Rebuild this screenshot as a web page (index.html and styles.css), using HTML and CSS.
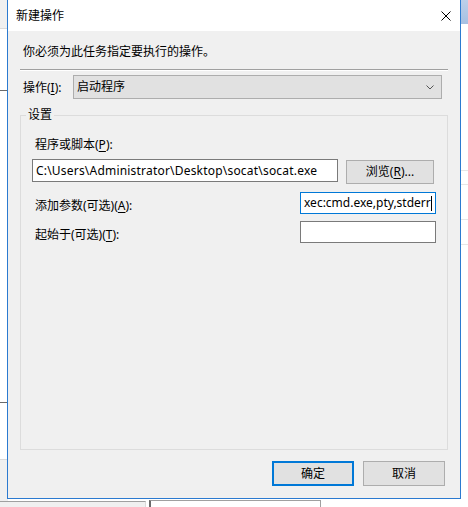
FILE: index.html
```html
<!DOCTYPE html>
<html lang="zh-CN">
<head>
<meta charset="utf-8">
<title>新建操作</title>
<link rel="stylesheet" href="styles.css">
</head>
<body>
<div class="desktop">
  <div class="bg-left">
    <div class="bg-left-pane">
      <div class="tick tick-a"></div>
      <div class="tick tick-b"></div>
    </div>
  </div>
  <div class="bg-right">
    <div class="bg-right-head"></div>
    <div class="hline h1"></div>
    <div class="hline h2"></div>
    <div class="hline h3"></div>
    <div class="hline h4"></div>
  </div>
  <div class="bg-bottom-a"></div>
  <div class="bg-bottom-b"></div>

  <div class="dialog">
    <div class="titlebar">
      <span class="title">新建操作</span>
      <svg class="close" width="10" height="10" viewBox="0 0 10 10">
        <path d="M0.5 0.5 L9.5 9.5 M9.5 0.5 L0.5 9.5" stroke="#000" stroke-width="1" fill="none"/>
      </svg>
    </div>
    <div class="content">
      <p class="intro">你必须为此任务指定要执行的操作。</p>
      <div class="sep"></div>
      <div class="action-row">
        <span class="action-label">操作(<u>I</u>):</span>
        <div class="select">
          <span class="select-text">启动程序</span>
          <svg class="chev" width="8" height="5" viewBox="0 0 8 5">
            <path d="M0.5 0.5 L4 4 L7.5 0.5" stroke="#555" stroke-width="1" fill="none"/>
          </svg>
        </div>
      </div>
      <fieldset class="group">
        <legend class="group-title">设置</legend>
        <div class="field-label">程序或脚本(<u>P</u>):</div>
        <div class="path-row">
          <div class="input path-input">C:\Users\Administrator\Desktop\socat\socat.exe</div>
          <div class="btn browse">浏览(<u>R</u>)...</div>
        </div>
        <div class="opt-row opt-args">
          <span class="opt-label">添加参数(可选)(<u>A</u>):</span>
          <div class="input small-input focused"><span class="scroll-text">xec:cmd.exe,pty,stderr</span><span class="caret"></span></div>
        </div>
        <div class="opt-row opt-start">
          <span class="opt-label">起始于(可选)(<u>T</u>):</span>
          <div class="input small-input"></div>
        </div>
      </fieldset>
      <div class="buttons">
        <div class="btn dlg-btn default">确定</div>
        <div class="btn dlg-btn">取消</div>
      </div>
    </div>
  </div>
</div>
</body>
</html>
```

FILE: styles.css
```css
* { box-sizing: border-box; }
html, body { margin: 0; padding: 0; }
body {
  width: 468px;
  height: 507px;
  overflow: hidden;
  background: #ffffff;
  font-family: "Noto Sans", "Noto Sans CJK SC", sans-serif;
  font-size: 12px;
  line-height: 16px;
  color: #000;
}
u { text-decoration: underline; text-underline-offset: 2px; }

.desktop { position: relative; width: 468px; height: 507px; }

/* background windows */
.bg-left { position: absolute; left: 0; top: 0; width: 8px; height: 501px; background: #f0f0f0; }
.bg-left-pane { position: relative; margin-top: 28px; height: 432px; background: #fff; border-top: 1px solid #dadada; border-bottom: 1px solid #dadada; }
.tick { position: absolute; left: 0; width: 8px; height: 1px; background: #6a6a6a; }
.tick-a { top: 61px; }
.tick-b { top: 373px; }

.bg-right { position: absolute; left: 461px; top: 0; width: 7px; height: 507px; background: #fff; }
.bg-right-head { height: 24px; background: linear-gradient(#bcd0ea, #a7c0e2); }
.hline { position: absolute; left: 0; width: 7px; height: 1px; background: #e6e6e6; }
.h1 { top: 170px; }
.h2 { top: 184px; }
.h3 { top: 219px; }
.h4 { top: 244px; }

.bg-bottom-a { position: absolute; left: 0; top: 501px; width: 146px; height: 6px; background: #f0f0f0; border-top: 1px solid #a0a0a0; border-right: 1px solid #dadada; }
.bg-bottom-b { position: absolute; left: 149px; top: 500px; width: 172px; height: 7px; background: #fff; border-left: 2px solid #6a6a6a; border-top: 1px solid #a0a0a0; border-right: 1px solid #a0a0a0; }

/* dialog */
.dialog {
  position: absolute;
  left: 7px;
  top: 0;
  width: 454px;
  height: 499px;
  background: #f0f0f0;
  border: 1px solid #2b7ad0;
  border-top: none;
  display: flex;
  flex-direction: column;
}
.titlebar {
  height: 31px;
  flex: none;
  background: #fff;
  display: flex;
  align-items: center;
  padding: 0 9px 0 8px;
}
.title { flex: 1; }
.close { display: block; flex: none; }

.content { flex: 1; display: flex; flex-direction: column; }
.intro { margin: 13px 0 0 15px; }
.sep { margin: 9px 12px 0 12px; height: 2px; border-top: 1px solid #a0a0a0; border-bottom: 1px solid #fff; }

.action-row { display: flex; align-items: center; margin-top: 4px; padding-left: 15px; }
.action-label { width: 50px; padding-top: 2px; }
.select {
  width: 369px;
  height: 24px;
  background: #e1e1e1;
  border: 1px solid #adadad;
  display: flex;
  align-items: center;
  padding: 0 7px 0 3px;
}
.select-text { flex: 1; }
.chev { display: block; }

.group {
  margin: 8px 12px 0 12px;
  padding: 0 11px 0 11px;
  height: 343px;
  border: 1px solid #dcdcdc;
  min-width: 0;
}
.group-title { padding: 0 2px; margin-left: -6px; line-height: 16px; }
.field-label { margin-top: 14px; padding-left: 3px; }

.path-row { display: flex; align-items: flex-start; gap: 8px; margin-top: 6px; }
.input {
  background: #fff;
  border: 1px solid #7a7a7a;
  white-space: nowrap;
  overflow: hidden;
}
.path-input { width: 306px; height: 23px; line-height: 21px; padding-left: 3px; letter-spacing: 0.2px; }
.btn {
  background: #e1e1e1;
  border: 1px solid #adadad;
  display: flex;
  align-items: center;
  justify-content: center;
}
.browse { width: 88px; height: 24px; margin-top: 1px; }

.opt-row { display: flex; align-items: flex-start; justify-content: space-between; }
.opt-args { margin-top: 8px; }
.opt-start { margin-top: 7px; }
.opt-label { padding-left: 3px; padding-top: 6px; }
.small-input { width: 136px; height: 22px; line-height: 20px; display: flex; justify-content: flex-start; padding-left: 3px; }
.focused { border-color: #0078d7; }
.caret { display: block; flex: none; width: 1px; height: 15px; margin-top: 3px; background: #000; }

.buttons { display: flex; justify-content: flex-end; gap: 9px; margin-top: 11px; padding-right: 15px; }
.dlg-btn { width: 82px; height: 25px; }
.default { border: 2px solid #0078d7; }
```
